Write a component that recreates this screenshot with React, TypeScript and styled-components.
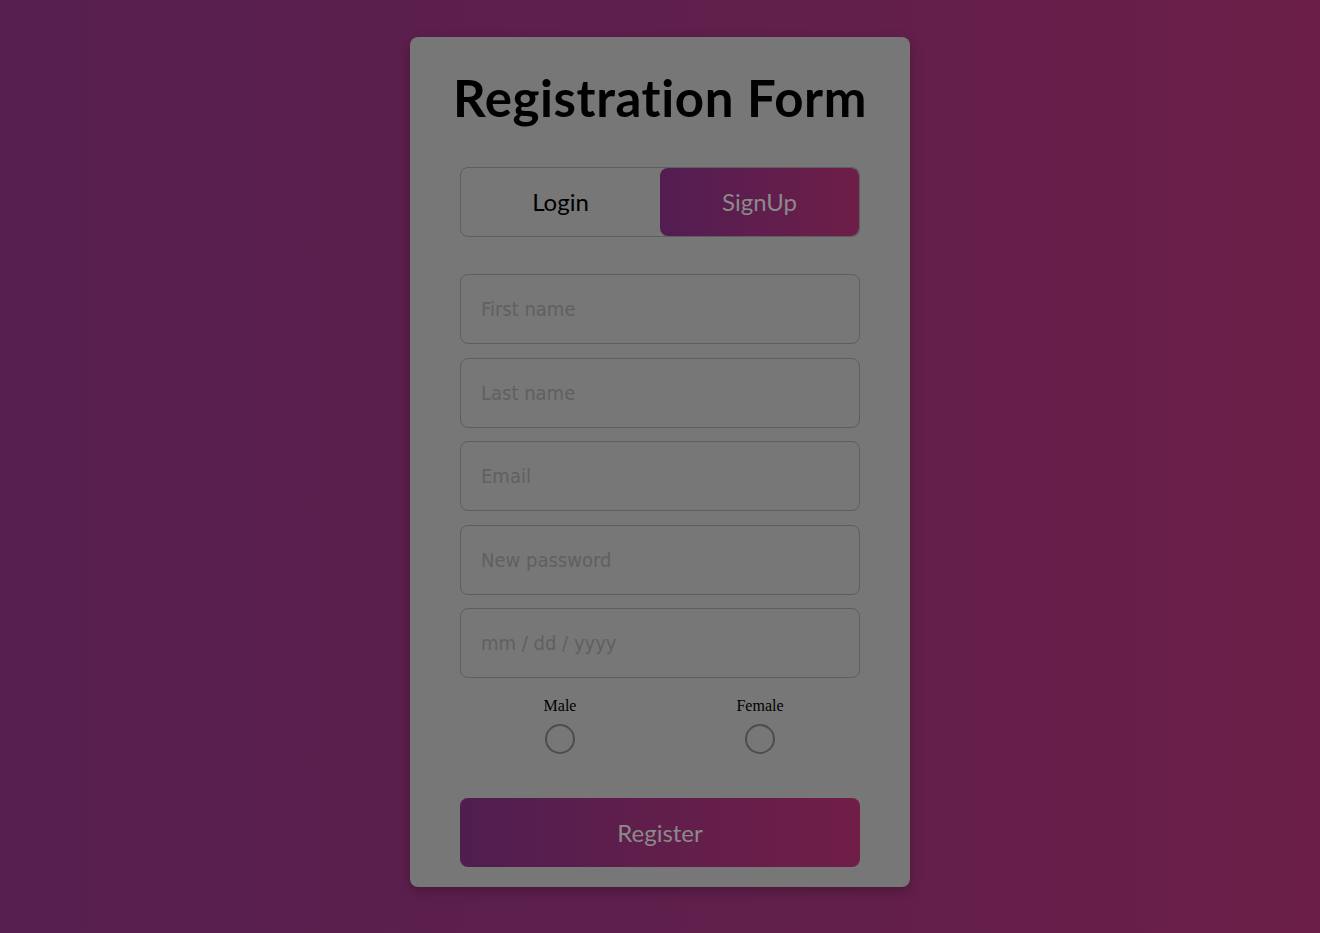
import React from "react";
import styled, { createGlobalStyle } from "styled-components";

const Global = createGlobalStyle`
  html, body { margin: 0; padding: 0; }
  body {
    min-height: 933px;
    background: linear-gradient(90deg, #561f4f 0%, #5f1f4c 50%, #6b1f48 100%);
    font-family: "Lato", "Open Sans", sans-serif;
  }
  #root { min-height: 933px; }
`;

const Page = styled.div`
  min-height: 933px;
  display: flex;
  justify-content: center;
  align-items: flex-start;
  padding-top: 37px;
  box-sizing: border-box;
`;

const Card = styled.form`
  width: 500px;
  height: 850px;
  box-sizing: border-box;
  background: #777777;
  border-radius: 8px;
  box-shadow: 0 4px 12px rgba(0, 0, 0, 0.25);
  padding: 0 50px;
  display: flex;
  flex-direction: column;
`;

const Title = styled.h1`
  margin: 32px -30px 0;
  height: 58px;
  line-height: 58px;
  text-align: center;
  white-space: nowrap;
  font-family: "Lato", sans-serif;
  font-weight: 700;
  font-size: 51px;
  color: #000;
  letter-spacing: 0.6px;
`;

const Tabs = styled.div`
  margin-top: 40px;
  height: 70px;
  border: 1px solid #5e5e5e;
  border-radius: 8px;
  display: grid;
  grid-template-columns: 1fr 1fr;
  box-sizing: border-box;
  overflow: hidden;
`;

const Tab = styled.button<{ $active?: boolean }>`
  border: none;
  border-radius: 8px;
  font-family: "Lato", sans-serif;
  font-size: 24px;
  cursor: pointer;
  padding-bottom: 2px;
  color: ${(p) => (p.$active ? "#8a8a8a" : "#000")};
  background: ${(p) =>
    p.$active ? "linear-gradient(90deg, #521d52 0%, #6e1e48 100%)" : "transparent"};
`;

const Fields = styled.div`
  margin-top: 37px;
  display: flex;
  flex-direction: column;
  gap: 13.5px;
`;

const Input = styled.input`
  height: 70px;
  box-sizing: border-box;
  border: 1px solid #5e5e5e;
  border-radius: 8px;
  background: transparent;
  padding: 0 20px;
  font-family: "DejaVu Sans Condensed", "DejaVu Sans", sans-serif;
  font-stretch: condensed;
  font-size: 20px;
  color: #606060;
  outline: none;
  &::placeholder { color: #606060; }
`;

const Genders = styled.div`
  margin-top: 19px;
  display: grid;
  grid-template-columns: 1fr 1fr;
`;

const Gender = styled.label`
  display: flex;
  flex-direction: column;
  align-items: center;
  gap: 9px;
  font-family: "Liberation Serif", serif;
  font-size: 16px;
  color: #000;
`;

const Radio = styled.span`
  width: 30px;
  height: 30px;
  box-sizing: border-box;
  border: 2px solid #4c4c52;
  border-radius: 50%;
`;

const Submit = styled.button`
  margin-top: 44px;
  height: 69px;
  border: none;
  border-radius: 8px;
  background: linear-gradient(90deg, #4f1e50 0%, #5e1e4c 40%, #701e48 100%);
  color: #8a8a8a;
  font-family: "Lato", sans-serif;
  font-size: 24px;
  cursor: pointer;
`;

export default function App() {
  return (
    <>
      <Global />
      <Page>
        <Card onSubmit={(e) => e.preventDefault()}>
          <Title>Registration Form</Title>
          <Tabs>
            <Tab type="button">Login</Tab>
            <Tab type="button" $active>SignUp</Tab>
          </Tabs>
          <Fields>
            <Input placeholder="First name" />
            <Input placeholder="Last name" />
            <Input placeholder="Email" />
            <Input placeholder="New password" type="password" />
            <Input placeholder="mm / dd / yyyy" inputMode="numeric" />
          </Fields>
          <Genders>
            <Gender>
              Male
              <Radio />
            </Gender>
            <Gender>
              Female
              <Radio />
            </Gender>
          </Genders>
          <Submit type="submit">Register</Submit>
        </Card>
      </Page>
    </>
  );
}
